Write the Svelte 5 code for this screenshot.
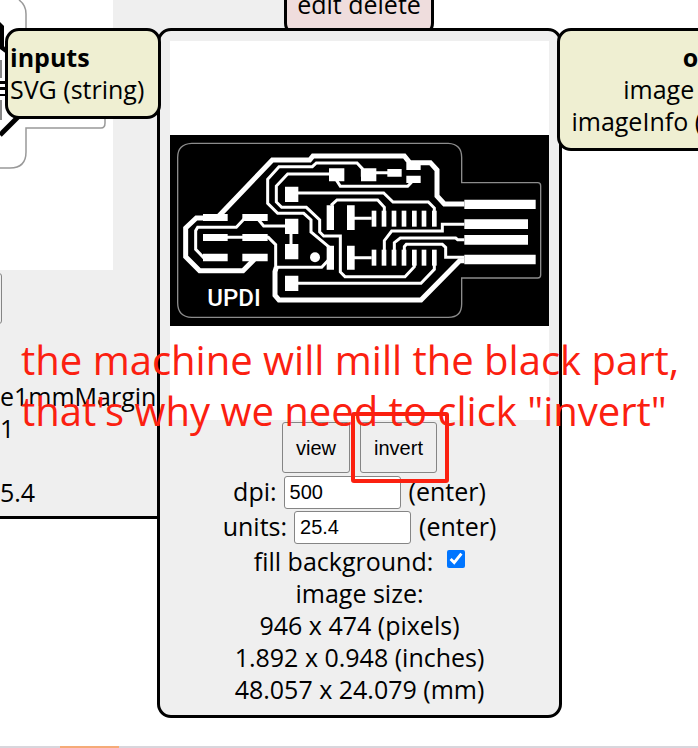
<script>
  let dpi = $state('500');
  let units = $state('25.4');
  let fill = $state(true);
  const size = ['946 x 474 (pixels)', '1.892 x 0.948 (inches)', '48.057 x 24.079 (mm)'];
  const pins = [48, 78, 108, 138, 169, 198, 229];
</script>

<main class="workspace">
  <section class="module source">
    <div class="preview">
      <svg viewBox="0 0 113 270" width="113" height="270" aria-hidden="true">
        <g fill="none" stroke="#999" stroke-width="1.5">
          <path d="M19 0Q26 5 26 14V28M0 168H10Q26 168 26 152V128H101Q105 128 105 123V110" />
        </g>
        <path d="M0 22L4 26V46L8 52V55L0 49Z" />
        <path d="M0 60H2V78H0M0 100H2V120H0" fill="#888" />
        <path d="M0 81H8V84H0ZM0 87H8V90H0ZM0 94H8V96H0Z" />
        <path d="M0 135L18 117" stroke="#000" stroke-width="5" />
      </svg>
    </div>
    <button class="edge" aria-label="view"></button>
    <div class="facts">
      <p>e1mmMargin</p>
      <p class="indent">1</p>
      <p class="gap">5.4</p>
    </div>
  </section>

  <nav class="actions"><a href="#edit">edit</a> <a href="#delete">delete</a></nav>

  <section class="module convert">
    <div class="canvas">
      <svg viewBox="15 15 1137 573" aria-label="UPDI board">
        <rect x="15" y="15" width="1137" height="573" />
        <path class="outline" d="M80 40H850Q890 42 890 82V158H1118Q1127 158 1127 167V435Q1127 444 1118 444H890V522Q890 562 850 562H80Q38 560 38 518V82Q38 42 80 40Z" />
        <g class="thick">
          <path d="M158 262L322 90H434L444 78H718L734 98H796L816 120V198L838 222H898" />
          <path d="M130 264H94L62 294V380L104 422H234L268 388" />
          <path d="M334 412L330 425V496L342 510H768L884 392H898" />
        </g>
        <g class="thin">
          <path d="M498 356L438 306V270L416 250H338L308 220V148L342 110H442L454 99H576L592 116V140" />
          <path d="M514 132H368L334 168V216L350 232H424L464 270V306L476 318H526V426L540 440H720L748 410V380" />
          <path d="M514 150L526 169H728L746 150" />
          <path d="M380 189H656L684 216H790L808 234V264" />
          <path d="M498 226L516 210H638L658 232V264" />
          <path d="M130 383H116L92 358V302L98 292H214L240 264H276L296 288H380" />
          <path d="M150 322H310L332 344V412H470L496 384" />
          <path d="M378 290V364M380 460H768L808 418V384M560 265H620M560 383H620M610 128H688" />
          <path d="M658 382V332L680 303H832V283H898" />
          <path d="M688 382V338L706 324H872L878 329H898" />
          <path d="M718 382V350L724 343H832L842 352V382H898" />
        </g>
        <g class="pad">
          <path d="M114 252h74v21h-74zM232 252h76v21h-76zM114 312h74v21h-74zM232 312h76v21h-76zM114 371h74v23h-74zM232 371h76v23h-76z" />
          <path d="M360 170h40v46h-40zM360 266h40v46h-40zM360 342h40v46h-40zM360 437h40v46h-40z" />
          <path d="M492 115h46v39h-46zM588 115h46v39h-46zM667 117h43v23h-43zM724 98h43v22h-43zM724 137h43v22h-43z" />
          <path d="M485 226h22v74h-22zM546 226h23v74h-23zM485 347h22v72h-22zM546 347h23v72h-23z" />
          <path d="M898 209h214v28H898zM898 268h191v29H898zM898 315h191v29H898zM898 374h214v29H898z" />
          {#each pins as x}
            <rect x={x + 572} y="242" width="14" height="48" />
            <rect x={x + 572} y="359" width="14" height="48" />
          {/each}
          <circle cx="450" cy="382" r="15" />
        </g>
        <text class="mark" x="127" y="528">UPDI</text>
      </svg>
    </div>
    <div class="buttons">
      <button>view</button>
      <button>invert</button>
    </div>
    <div class="row field">
      <label for="dpi">dpi:</label><input id="dpi" type="text" bind:value={dpi} /><span>(enter)</span>
    </div>
    <div class="row field">
      <label for="units">units:</label><input id="units" type="text" bind:value={units} /><span>(enter)</span>
    </div>
    <div class="row check">
      <label for="fill">fill background:</label><input id="fill" type="checkbox" bind:checked={fill} />
    </div>
    <div class="row">image size:</div>
    {#each size as line}<div class="row">{line}</div>{/each}
  </section>

  <section class="ports inputs">
    <strong>inputs</strong>
    <span>SVG (string)</span>
  </section>
  <section class="ports outputs">
    <strong>outputs</strong>
    <span>image (RGBA)</span>
    <span>imageInfo (object)</span>
  </section>

  <div class="highlight"></div>
  <p class="note">the machine will mill the black part,<br />that's why we need to click "invert"</p>
  <div class="strip"><i></i></div>
</main>

<style>
  :global(body) { margin: 0; background: #fff; }
  .workspace {
    position: relative;
    height: 100vh;
    overflow: hidden;
    font: 25px/32px "Open Sans", "Noto Sans", sans-serif;
    color: #000;
  }
  p { margin: 0; }
  .module, .ports, .actions {
    position: absolute;
    box-sizing: border-box;
    border: 3px solid #000;
    border-radius: 14px;
    white-space: nowrap;
  }
  .module { background: #efefef; }
  .source { left: -63px; top: -3px; width: 405px; padding: 0 0 8px 60px; }
  .preview { width: 113px; height: 270px; background: #fff; }
  .preview svg { display: block; }
  button {
    box-sizing: border-box;
    height: 51px;
    padding: 0 13px;
    border: 1px solid #858585;
    border-radius: 3px;
    background: #efefef;
    font: 20px/24px "Liberation Sans", Arial, sans-serif;
    color: #000;
  }
  .edge { display: block; width: 62px; margin: 3px 0 56px -60px; }
  .actions {
    left: 284px;
    top: -27px;
    width: 150px;
    padding: 12px 0 14px;
    background: #efdddd;
    text-align: center;
  }
  .gap { margin-top: 32px; }
  .actions a { color: inherit; text-decoration: none; }
  .convert {
    left: 157px;
    top: 28px;
    width: 405px;
    padding: 10px;
    display: flex;
    flex-direction: column;
  }
  .canvas { display: flex; align-items: center; aspect-ratio: 1; background: #fff; }
  .canvas svg { display: block; width: 100%; }
  .outline { fill: none; stroke: #8c8c8c; stroke-width: 4; }
  .thick, .thin { fill: none; stroke: #fff; }
  .thick { stroke-width: 15; }
  .thin { stroke-width: 9; }
  .mark { font: 500 72px Roboto, sans-serif; fill: #fff; }
  .pad { fill: #fff; }
  .buttons { display: flex; justify-content: center; align-items: center; gap: 10px; height: 55px; }
  .row { display: flex; justify-content: center; align-items: center; height: 32px; }
  .field { height: 35px; }
  .field label { padding-bottom: 3px; margin-right: 7px; }
  .field span { padding-bottom: 3px; margin-left: 8px; }
  .field input {
    box-sizing: border-box;
    width: 117px;
    height: 33px;
    padding: 0 5px;
    border: 1px solid #858585;
    border-radius: 3px;
    background: #fff;
    font: 20px/24px "Liberation Sans", Arial, sans-serif;
    color: #000;
  }
  .check input { width: 18px; height: 18px; margin: 0 0 4px 14px; accent-color: #0075ff; }
  .ports { top: 28px; display: flex; flex-direction: column; padding: 10px 2px 11px; background: #efefd2; }
  .inputs { left: 5px; width: 156px; }
  .outputs { left: 557px; width: 232px; align-items: flex-end; padding-right: 5px; }
  .highlight {
    position: absolute;
    box-sizing: border-box;
    left: 351px;
    top: 412px;
    width: 98px;
    height: 71px;
    border: 4px solid #fb2010;
    border-radius: 3px;
  }
  .note {
    position: absolute;
    left: 21px;
    top: 334px;
    font-size: 40px;
    line-height: 51px;
    white-space: nowrap;
    color: #fb2010;
  }
  .strip { position: absolute; left: 0; right: 0; bottom: 0; height: 2px; background: #d8d6dc; }
  .strip i { display: block; width: 59px; height: 2px; margin-left: 60px; background: #f5ab78; }
</style>
